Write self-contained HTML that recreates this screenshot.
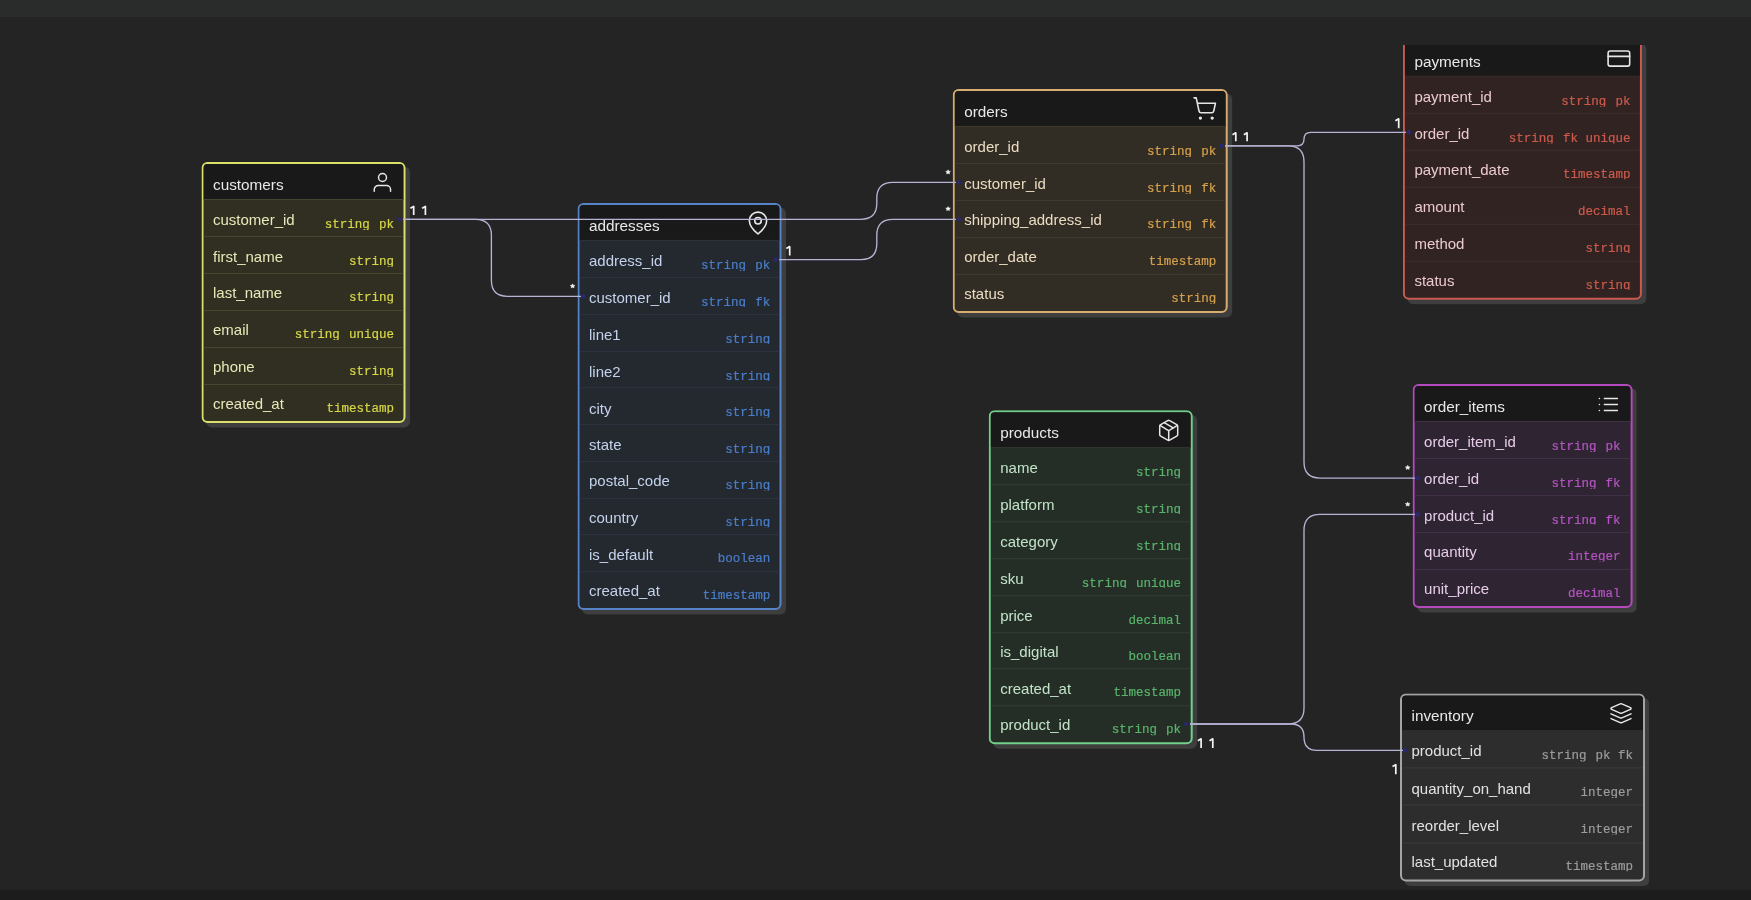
<!DOCTYPE html>
<html><head><meta charset="utf-8"><title>ERD</title><style>
*{box-sizing:border-box;margin:0;padding:0}
html,body{width:1751px;height:900px;overflow:hidden;background:#242424}
body{position:relative;font-family:"Liberation Sans",sans-serif}
#top{position:absolute;left:0;top:0;width:1751px;height:17px;background:#2a2b2b}
#bot{position:absolute;left:0;top:890px;width:1751px;height:10px;background:#1c1c1c}
.t{position:absolute;border:2px solid;border-radius:6px;overflow:hidden;will-change:transform;box-shadow:4.5px 4.5px 0 #3e3e3e}
.h{position:absolute;left:0;right:0;top:0;height:36px;background:#191919}
.h .n{position:absolute;left:9.5px;top:12.1px;font-size:15.3px;line-height:17px;color:#e8e8e8;white-space:nowrap}
.h svg{position:absolute;top:6px;right:9.5px;width:24px;height:24px;fill:none;stroke:#e6e6e6;stroke-width:1.5;stroke-linecap:round;stroke-linejoin:round}
.r{position:absolute;left:0;right:0;border-top:1px solid}
.r .f{position:absolute;left:9.5px;top:11.2px;font-size:15px;line-height:17px;white-space:nowrap}
.r .y{position:absolute;right:9.5px;top:18.0px;height:11.4px;overflow:hidden;font-family:"Liberation Mono",monospace;font-size:12.5px;line-height:14px;white-space:nowrap;-webkit-text-stroke:0.2px currentColor}
.r .y i{font-style:normal;margin-left:9.2px}
.r .y i+i{margin-left:7.4px}
#edges{position:absolute;left:0;top:0;width:1751px;height:900px;overflow:visible}
</style></head>
<body>
<div id="top"></div>
<div class="t" style="left:201px;top:162px;width:204.00px;height:261.25px;border-color:#dcdf6a;background:#302f22;transform:translate(0.50px,0.00px)"><div class="h"><span class="n">customers</span><svg viewBox="0 0 24 24"><circle cx="12" cy="7.5" r="4"/><path d="M3.75 21.25V19.5a4 4 0 0 1 4-4h8.3a4 4 0 0 1 4 4v1.75"/></svg></div><div class="r" style="top:35.25px;height:37.00px;border-color:#474631"><span class="f" style="color:#e8e8b8;transform:translateY(0.00px)">customer_id</span><span class="y" style="color:#d6d648;transform:translateY(0.00px)">string<i>pk</i></span></div><div class="r" style="top:72.25px;height:37.00px;border-color:#474631"><span class="f" style="color:#e8e8b8;transform:translateY(-0.30px)">first_name</span><span class="y" style="color:#d6d648;transform:translateY(-0.30px)">string</span></div><div class="r" style="top:109.25px;height:37.00px;border-color:#474631"><span class="f" style="color:#e8e8b8;transform:translateY(-0.60px)">last_name</span><span class="y" style="color:#d6d648;transform:translateY(-0.60px)">string</span></div><div class="r" style="top:146.25px;height:37.00px;border-color:#474631"><span class="f" style="color:#e8e8b8;transform:translateY(-0.90px)">email</span><span class="y" style="color:#d6d648;transform:translateY(-0.90px)">string<i>unique</i></span></div><div class="r" style="top:183.25px;height:37.00px;border-color:#474631"><span class="f" style="color:#e8e8b8;transform:translateY(-1.20px)">phone</span><span class="y" style="color:#d6d648;transform:translateY(-1.20px)">string</span></div><div class="r" style="top:220.25px;height:37.00px;border-color:#474631"><span class="f" style="color:#e8e8b8;transform:translateY(-1.50px)">created_at</span><span class="y" style="color:#d6d648;transform:translateY(-1.50px)">timestamp</span></div></div><div class="t" style="left:577px;top:202px;width:204.20px;height:407.05px;border-color:#5582c8;background:#24282f;transform:translate(0.50px,0.90px)"><div class="h"><span class="n">addresses</span><svg viewBox="0 0 24 24"><g transform="translate(11.5 12) scale(1.08) translate(-12 -12)"><path d="M20 10c0 4.993-5.539 10.193-7.399 11.799a1 1 0 0 1-1.202 0C9.539 20.193 4 14.993 4 10a8 8 0 0 1 16 0"/><circle cx="12" cy="10" r="3"/></g></svg></div><div class="r" style="top:35.25px;height:36.78px;border-color:#2f3541"><span class="f" style="color:#c4d2ec;transform:translateY(0.00px)">address_id</span><span class="y" style="color:#4a7ec9;transform:translateY(0.00px)">string<i>pk</i></span></div><div class="r" style="top:72.03px;height:36.78px;border-color:#2f3541"><span class="f" style="color:#c4d2ec;transform:translateY(-0.08px)">customer_id</span><span class="y" style="color:#4a7ec9;transform:translateY(-0.08px)">string<i>fk</i></span></div><div class="r" style="top:108.81px;height:36.78px;border-color:#2f3541"><span class="f" style="color:#c4d2ec;transform:translateY(-0.16px)">line1</span><span class="y" style="color:#4a7ec9;transform:translateY(-0.16px)">string</span></div><div class="r" style="top:145.59px;height:36.78px;border-color:#2f3541"><span class="f" style="color:#c4d2ec;transform:translateY(-0.24px)">line2</span><span class="y" style="color:#4a7ec9;transform:translateY(-0.24px)">string</span></div><div class="r" style="top:182.37px;height:36.78px;border-color:#2f3541"><span class="f" style="color:#c4d2ec;transform:translateY(-0.32px)">city</span><span class="y" style="color:#4a7ec9;transform:translateY(-0.32px)">string</span></div><div class="r" style="top:219.15px;height:36.78px;border-color:#2f3541"><span class="f" style="color:#c4d2ec;transform:translateY(-0.40px)">state</span><span class="y" style="color:#4a7ec9;transform:translateY(-0.40px)">string</span></div><div class="r" style="top:255.93px;height:36.78px;border-color:#2f3541"><span class="f" style="color:#c4d2ec;transform:translateY(-0.48px)">postal_code</span><span class="y" style="color:#4a7ec9;transform:translateY(-0.48px)">string</span></div><div class="r" style="top:292.71px;height:36.78px;border-color:#2f3541"><span class="f" style="color:#c4d2ec;transform:translateY(-0.56px)">country</span><span class="y" style="color:#4a7ec9;transform:translateY(-0.56px)">string</span></div><div class="r" style="top:329.49px;height:36.78px;border-color:#2f3541"><span class="f" style="color:#c4d2ec;transform:translateY(-0.64px)">is_default</span><span class="y" style="color:#4a7ec9;transform:translateY(-0.64px)">boolean</span></div><div class="r" style="top:366.27px;height:36.78px;border-color:#2f3541"><span class="f" style="color:#c4d2ec;transform:translateY(-0.72px)">created_at</span><span class="y" style="color:#4a7ec9;transform:translateY(-0.72px)">timestamp</span></div></div><div class="t" style="left:952px;top:88px;width:275.10px;height:224.25px;border-color:#d6ac70;background:#312c24;transform:translate(0.70px,0.94px)"><div class="h"><span class="n">orders</span><svg viewBox="0 0 24 24"><g transform="translate(12 11) scale(1.07) translate(-12 -11.5)"><circle cx="8" cy="21" r="0.8"/><circle cx="19" cy="21" r="0.8"/><path d="M2.05 2.05h2l2.66 12.42a2 2 0 0 0 2 1.58h9.78a2 2 0 0 0 1.95-1.57l1.65-7.43H5.12"/></g></svg></div><div class="r" style="top:35.25px;height:37.00px;border-color:#423a2f"><span class="f" style="color:#ecdcc2;transform:translateY(0.00px)">order_id</span><span class="y" style="color:#d4a04c;transform:translateY(0.00px)">string<i>pk</i></span></div><div class="r" style="top:72.25px;height:37.00px;border-color:#423a2f"><span class="f" style="color:#ecdcc2;transform:translateY(-0.30px)">customer_id</span><span class="y" style="color:#d4a04c;transform:translateY(-0.30px)">string<i>fk</i></span></div><div class="r" style="top:109.25px;height:37.00px;border-color:#423a2f"><span class="f" style="color:#ecdcc2;transform:translateY(-0.60px)">shipping_address_id</span><span class="y" style="color:#d4a04c;transform:translateY(-0.60px)">string<i>fk</i></span></div><div class="r" style="top:146.25px;height:37.00px;border-color:#423a2f"><span class="f" style="color:#ecdcc2;transform:translateY(-0.90px)">order_date</span><span class="y" style="color:#d4a04c;transform:translateY(-0.90px)">timestamp</span></div><div class="r" style="top:183.25px;height:37.00px;border-color:#423a2f"><span class="f" style="color:#ecdcc2;transform:translateY(-1.20px)">status</span><span class="y" style="color:#d4a04c;transform:translateY(-1.20px)">string</span></div></div><div class="t" style="left:1402px;top:38px;width:239.00px;height:260.65px;border-color:#c85a52;background:#302322;transform:translate(0.90px,0.73px);clip-path:inset(6.27px -20px -20px -20px)"><div class="h"><span class="n">payments</span><svg viewBox="0 0 24 24"><g transform="translate(12 11.8) scale(1.08) translate(-12 -12)"><rect width="20" height="14" x="2" y="5" rx="2"/><line x1="2" x2="22" y1="10" y2="10"/></g></svg></div><div class="r" style="top:35.25px;height:36.90px;border-color:#402e2d"><span class="f" style="color:#eccace;transform:translateY(0.00px)">payment_id</span><span class="y" style="color:#cc5a4c;transform:translateY(0.00px)">string<i>pk</i></span></div><div class="r" style="top:72.15px;height:36.90px;border-color:#402e2d"><span class="f" style="color:#eccace;transform:translateY(-0.20px)">order_id</span><span class="y" style="color:#cc5a4c;transform:translateY(-0.20px)">string<i>fk</i><i>unique</i></span></div><div class="r" style="top:109.05px;height:36.90px;border-color:#402e2d"><span class="f" style="color:#eccace;transform:translateY(-0.40px)">payment_date</span><span class="y" style="color:#cc5a4c;transform:translateY(-0.40px)">timestamp</span></div><div class="r" style="top:145.95px;height:36.90px;border-color:#402e2d"><span class="f" style="color:#eccace;transform:translateY(-0.60px)">amount</span><span class="y" style="color:#cc5a4c;transform:translateY(-0.60px)">decimal</span></div><div class="r" style="top:182.85px;height:36.90px;border-color:#402e2d"><span class="f" style="color:#eccace;transform:translateY(-0.80px)">method</span><span class="y" style="color:#cc5a4c;transform:translateY(-0.80px)">string</span></div><div class="r" style="top:219.75px;height:36.90px;border-color:#402e2d"><span class="f" style="color:#eccace;transform:translateY(-1.00px)">status</span><span class="y" style="color:#cc5a4c;transform:translateY(-1.00px)">string</span></div></div><div class="t" style="left:1412px;top:384px;width:219.50px;height:223.75px;border-color:#b44abe;background:#2f2532;transform:translate(0.60px,0.00px)"><div class="h"><span class="n">order_items</span><svg viewBox="0 0 24 24"><g transform="translate(-0.2 0.5)"><path d="M3 12h.01"/><path d="M3 18h.01"/><path d="M3 6h.01"/><path d="M8 12h13"/><path d="M8 18h13"/><path d="M8 6h13"/></g></svg></div><div class="r" style="top:35.25px;height:36.90px;border-color:#402f46"><span class="f" style="color:#e6cce8;transform:translateY(0.00px)">order_item_id</span><span class="y" style="color:#b454c2;transform:translateY(0.00px)">string<i>pk</i></span></div><div class="r" style="top:72.15px;height:36.90px;border-color:#402f46"><span class="f" style="color:#e6cce8;transform:translateY(-0.20px)">order_id</span><span class="y" style="color:#b454c2;transform:translateY(-0.20px)">string<i>fk</i></span></div><div class="r" style="top:109.05px;height:36.90px;border-color:#402f46"><span class="f" style="color:#e6cce8;transform:translateY(-0.40px)">product_id</span><span class="y" style="color:#b454c2;transform:translateY(-0.40px)">string<i>fk</i></span></div><div class="r" style="top:145.95px;height:36.90px;border-color:#402f46"><span class="f" style="color:#e6cce8;transform:translateY(-0.60px)">quantity</span><span class="y" style="color:#b454c2;transform:translateY(-0.60px)">integer</span></div><div class="r" style="top:182.85px;height:36.90px;border-color:#402f46"><span class="f" style="color:#e6cce8;transform:translateY(-0.80px)">unit_price</span><span class="y" style="color:#b454c2;transform:translateY(-0.80px)">decimal</span></div></div><div class="t" style="left:988px;top:410px;width:203.90px;height:334.05px;border-color:#72d08c;background:#252d27;transform:translate(0.70px,0.20px)"><div class="h"><span class="n">products</span><svg viewBox="0 0 24 24"><g transform="translate(0 0.2)"><path d="M11 21.73a2 2 0 0 0 2 0l7-4A2 2 0 0 0 21 16V8a2 2 0 0 0-1-1.73l-7-4a2 2 0 0 0-2 0l-7 4A2 2 0 0 0 3 8v8a2 2 0 0 0 1 1.73z"/><path d="M12 22V12"/><path d="m3.3 7 7.703 4.734a2 2 0 0 0 1.994 0L20.7 7"/><path d="m7.5 4.27 9 5.15"/></g></svg></div><div class="r" style="top:35.25px;height:36.85px;border-color:#333d34"><span class="f" style="color:#c2e4c8;transform:translateY(0.00px)">name</span><span class="y" style="color:#58b46a;transform:translateY(0.00px)">string</span></div><div class="r" style="top:72.10px;height:36.85px;border-color:#333d34"><span class="f" style="color:#c2e4c8;transform:translateY(-0.15px)">platform</span><span class="y" style="color:#58b46a;transform:translateY(-0.15px)">string</span></div><div class="r" style="top:108.95px;height:36.85px;border-color:#333d34"><span class="f" style="color:#c2e4c8;transform:translateY(-0.30px)">category</span><span class="y" style="color:#58b46a;transform:translateY(-0.30px)">string</span></div><div class="r" style="top:145.80px;height:36.85px;border-color:#333d34"><span class="f" style="color:#c2e4c8;transform:translateY(-0.45px)">sku</span><span class="y" style="color:#58b46a;transform:translateY(-0.45px)">string<i>unique</i></span></div><div class="r" style="top:182.65px;height:36.85px;border-color:#333d34"><span class="f" style="color:#c2e4c8;transform:translateY(-0.60px)">price</span><span class="y" style="color:#58b46a;transform:translateY(-0.60px)">decimal</span></div><div class="r" style="top:219.50px;height:36.85px;border-color:#333d34"><span class="f" style="color:#c2e4c8;transform:translateY(-0.75px)">is_digital</span><span class="y" style="color:#58b46a;transform:translateY(-0.75px)">boolean</span></div><div class="r" style="top:256.35px;height:36.85px;border-color:#333d34"><span class="f" style="color:#c2e4c8;transform:translateY(-0.90px)">created_at</span><span class="y" style="color:#58b46a;transform:translateY(-0.90px)">timestamp</span></div><div class="r" style="top:293.20px;height:36.85px;border-color:#333d34"><span class="f" style="color:#c2e4c8;transform:translateY(-1.05px)">product_id</span><span class="y" style="color:#58b46a;transform:translateY(-1.05px)">string<i>pk</i></span></div></div><div class="t" style="left:1400px;top:693px;width:244.50px;height:187.65px;border-color:#a4a4a4;background:#2d2d2d;transform:translate(0.00px,0.40px)"><div class="h"><span class="n">inventory</span><svg viewBox="0 0 24 24"><g transform="translate(12 12) scale(1 0.95) translate(-12 -12.2)"><path d="m12.83 2.18a2 2 0 0 0-1.66 0L2.6 6.08a1 1 0 0 0 0 1.83l8.58 3.91a2 2 0 0 0 1.66 0l8.58-3.9a1 1 0 0 0 0-1.83Z"/><path d="m22 17.65-9.17 4.16a2 2 0 0 1-1.66 0L2 17.65"/><path d="m22 12.65-9.17 4.16a2 2 0 0 1-1.66 0L2 12.65"/></g></svg></div><div class="r" style="top:35.25px;height:37.10px;border-color:#3a3a3a"><span class="f" style="color:#e2e2e2;transform:translateY(0.00px)">product_id</span><span class="y" style="color:#9c9c9c;transform:translateY(0.00px)">string<i>pk</i><i>fk</i></span></div><div class="r" style="top:72.35px;height:37.10px;border-color:#3a3a3a"><span class="f" style="color:#e2e2e2;transform:translateY(-0.40px)">quantity_on_hand</span><span class="y" style="color:#9c9c9c;transform:translateY(-0.40px)">integer</span></div><div class="r" style="top:109.45px;height:37.10px;border-color:#3a3a3a"><span class="f" style="color:#e2e2e2;transform:translateY(-0.80px)">reorder_level</span><span class="y" style="color:#9c9c9c;transform:translateY(-0.80px)">integer</span></div><div class="r" style="top:146.55px;height:37.10px;border-color:#3a3a3a"><span class="f" style="color:#e2e2e2;transform:translateY(-1.20px)">last_updated</span><span class="y" style="color:#9c9c9c;transform:translateY(-1.20px)">timestamp</span></div></div>
<svg id="edges" viewBox="0 0 1751 900"><circle cx="399.7" cy="219.3" r="2.3" fill="#2a286c"/><circle cx="583.5" cy="296.3" r="2.3" fill="#2a286c"/><circle cx="959" cy="182.4" r="2.3" fill="#2a286c"/><circle cx="959" cy="219.3" r="2.3" fill="#2a286c"/><circle cx="775.5" cy="259.6" r="2.3" fill="#2a286c"/><circle cx="1221.7" cy="145.8" r="2.3" fill="#2a286c"/><circle cx="1409" cy="132.3" r="2.3" fill="#2a286c"/><circle cx="1418" cy="478.1" r="2.3" fill="#2a286c"/><circle cx="1418" cy="514.4" r="2.3" fill="#2a286c"/><circle cx="1186.2" cy="724" r="2.3" fill="#2a286c"/><circle cx="1404.8" cy="750.3" r="2.3" fill="#2a286c"/><path d="M403,219.3 L475.40,219.30 Q491.4,219.3 491.40,235.30 L491.40,280.30 Q491.4,296.3 507.40,296.30 L581,296.3" fill="none" stroke="#b6b3d4" stroke-width="1.35"/><path d="M403,219.3 L860.80,219.30 Q876.8,219.3 876.80,203.30 L876.80,198.40 Q876.8,182.4 892.80,182.40 L956,182.4" fill="none" stroke="#b6b3d4" stroke-width="1.35"/><path d="M779,259.6 L860.80,259.60 Q876.8,259.6 876.80,243.60 L876.80,235.30 Q876.8,219.3 892.80,219.30 L956,219.3" fill="none" stroke="#b6b3d4" stroke-width="1.35"/><path d="M1225,145.8 L1297.25,145.80 Q1304,145.8 1304.00,139.05 L1304.00,139.05 Q1304,132.3 1310.75,132.30 L1406,132.3" fill="none" stroke="#b6b3d4" stroke-width="1.35"/><path d="M1225,145.8 L1288.00,145.80 Q1304,145.8 1304.00,161.80 L1304.00,462.10 Q1304,478.1 1320.00,478.10 L1415,478.1" fill="none" stroke="#b6b3d4" stroke-width="1.35"/><path d="M1190,724 L1288.00,724.00 Q1304,724 1304.00,708.00 L1304.00,530.40 Q1304,514.4 1320.00,514.40 L1415,514.4" fill="none" stroke="#b6b3d4" stroke-width="1.35"/><path d="M1190,724 L1290.85,724.00 Q1304,724 1304.00,737.15 L1304.00,737.15 Q1304,750.3 1317.15,750.30 L1403,750.3" fill="none" stroke="#b6b3d4" stroke-width="1.35"/></svg>
<svg id="lbls" viewBox="0 0 1751 900" style="position:absolute;left:0;top:0;width:1751px;height:900px"><path d="M410.40,208.30 L413.70,206.40 L413.70,215.10" fill="none" stroke="#f4f4f4" stroke-width="1.7" stroke-linejoin="round" stroke-linecap="butt"/><path d="M422.10,208.30 L425.40,206.40 L425.40,215.10" fill="none" stroke="#f4f4f4" stroke-width="1.7" stroke-linejoin="round" stroke-linecap="butt"/><path d="M786.40,248.50 L789.70,246.60 L789.70,255.60" fill="none" stroke="#f4f4f4" stroke-width="1.7" stroke-linejoin="round" stroke-linecap="butt"/><path d="M1232.50,134.70 L1235.80,132.80 L1235.80,141.20" fill="none" stroke="#f4f4f4" stroke-width="1.7" stroke-linejoin="round" stroke-linecap="butt"/><path d="M1243.80,134.70 L1247.10,132.80 L1247.10,141.20" fill="none" stroke="#f4f4f4" stroke-width="1.7" stroke-linejoin="round" stroke-linecap="butt"/><path d="M1395.40,120.70 L1398.70,118.80 L1398.70,128.20" fill="none" stroke="#f4f4f4" stroke-width="1.7" stroke-linejoin="round" stroke-linecap="butt"/><path d="M1197.80,740.70 L1201.10,738.80 L1201.10,748.10" fill="none" stroke="#f4f4f4" stroke-width="1.7" stroke-linejoin="round" stroke-linecap="butt"/><path d="M1209.50,740.70 L1212.80,738.80 L1212.80,748.10" fill="none" stroke="#f4f4f4" stroke-width="1.7" stroke-linejoin="round" stroke-linecap="butt"/><path d="M1392.50,766.60 L1395.80,764.70 L1395.80,774.20" fill="none" stroke="#f4f4f4" stroke-width="1.7" stroke-linejoin="round" stroke-linecap="butt"/><polygon points="572.60,283.85 573.31,285.23 574.98,285.40 573.74,286.43 574.07,287.92 572.60,287.18 571.13,287.92 571.46,286.43 570.22,285.40 571.89,285.23" fill="#f4f4f4" stroke="#f4f4f4" stroke-width="0.5" stroke-linejoin="round"/><polygon points="948.10,169.85 948.81,171.23 950.48,171.40 949.24,172.43 949.57,173.92 948.10,173.18 946.63,173.92 946.96,172.43 945.72,171.40 947.39,171.23" fill="#f4f4f4" stroke="#f4f4f4" stroke-width="0.5" stroke-linejoin="round"/><polygon points="948.10,206.55 948.81,207.93 950.48,208.10 949.24,209.13 949.57,210.62 948.10,209.88 946.63,210.62 946.96,209.13 945.72,208.10 947.39,207.93" fill="#f4f4f4" stroke="#f4f4f4" stroke-width="0.5" stroke-linejoin="round"/><polygon points="1407.70,465.35 1408.41,466.73 1410.08,466.90 1408.84,467.93 1409.17,469.42 1407.70,468.68 1406.23,469.42 1406.56,467.93 1405.32,466.90 1406.99,466.73" fill="#f4f4f4" stroke="#f4f4f4" stroke-width="0.5" stroke-linejoin="round"/><polygon points="1407.70,502.05 1408.41,503.43 1410.08,503.60 1408.84,504.63 1409.17,506.12 1407.70,505.38 1406.23,506.12 1406.56,504.63 1405.32,503.60 1406.99,503.43" fill="#f4f4f4" stroke="#f4f4f4" stroke-width="0.5" stroke-linejoin="round"/></svg>
<div id="bot"></div>
</body></html>
